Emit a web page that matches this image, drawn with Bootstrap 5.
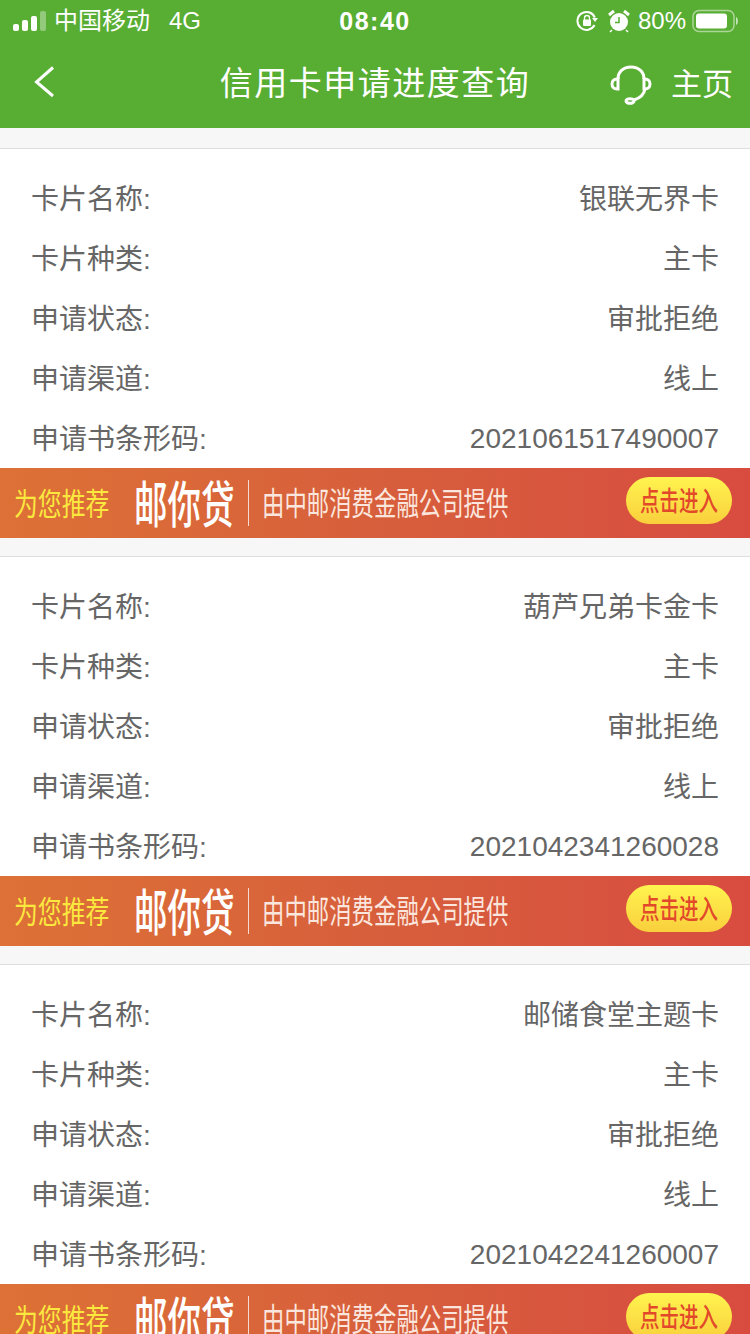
<!DOCTYPE html>
<html lang="zh-CN">
<head>
  <meta charset="UTF-8" />
  <title>信用卡申请进度查询</title>
  <link href="https://cdn.jsdelivr.net/npm/bootstrap@5.3.0/dist/css/bootstrap.min.css" rel="stylesheet"/>
  <style>
    html, body { height: 1334px; overflow: hidden; }
    body {
      background: #f7f7f7;
      font-family: "Liberation Sans", "Noto Sans CJK SC", sans-serif;
    }
    .app-head { background: #58ad33; color: #fff; height: 128px; }
    .status-row { height: 40px; font-size: 24px; }
    .status-time { font-size: 25px; font-weight: 700; letter-spacing: 1.5px; width: 100%; text-align: center; }
    .status-left, .status-right { position: absolute; top: 1px; height: 40px; }
    .status-left { left: 13px; }
    .status-right { right: 12px; }
    .head-row { height: 88px; position: relative; padding-bottom: 1px; }
    .head-title { font-size: 33px; letter-spacing: 1.5px; }
    .head-back { position: absolute; left: 33px; top: 24px; }
    .head-home { position: absolute; right: 17px; top: 22px; font-size: 31px; gap: 19px; }
    .apply-card { background: #fff; border-top: 1px solid #dedede; margin-top: 18px; }
    .apply-card:first-child { margin-top: 20px; }
    .apply-rows { padding: 20px 31px 0 31px; }
    .apply-line {
      height: 60px; padding-top: 2px; font-size: 28px; color: #666;
      display: flex; justify-content: space-between; align-items: center;
    }
    .apply-line:last-child { height: 59px; }
    .apply-code { margin-top: -2px; }
    .promo {
      height: 70px; position: relative;
      background: linear-gradient(90deg, #dd7136 0%, #d75f3c 50%, #d84c40 100%);
      font-family: "Noto Sans CJK SC", sans-serif;
    }
    .promo-a, .promo-b, .promo-c { position: absolute; white-space: nowrap; transform-origin: left; }
    .promo-a { color: #fbe83f; font-size: 31px; transform: scaleX(.77); left: 14px; top: 11px; line-height: 46px; }
    .promo-b { color: #fff; font-size: 50px; font-weight: 500; transform: scaleX(.67); left: 134px; top: 3px; line-height: 60px; }
    .promo-sep { position: absolute; left: 248px; top: 12px; height: 46px; border-left: 1px solid #f6dcd0; }
    .promo-c { color: #fbe6de; font-size: 32px; transform: scaleX(.7); left: 262px; top: 9px; line-height: 48px; }
    .promo-btn {
      position: absolute; left: 626px; top: 9px; width: 106px; height: 47px; border-radius: 24px;
      background: linear-gradient(180deg, #fff44f, #f9cf3c); color: #e2492a;
      font-size: 27px; font-weight: 500; line-height: 46px; text-align: center; white-space: nowrap;
    }
    .promo-btn span { display: inline-block; transform: scaleX(.72); margin: 0 -20px; }
  </style>
</head>
<body>

  <!-- Header -->
  <div class="app-head position-relative">
    <div class="status-row position-relative">
      <div class="status-left d-flex align-items-center">
        <svg width="33" height="22" viewBox="0 0 33 22">
          <rect x="0" y="14" width="6" height="7" rx="2" fill="#fff"/>
          <rect x="9" y="10" width="6" height="11" rx="2" fill="#fff"/>
          <rect x="18" y="6" width="6" height="15" rx="2" fill="#fff"/>
          <rect x="27" y="1" width="6" height="20" rx="2" fill="#fff" fill-opacity=".35"/>
        </svg>
        <span class="ms-2">中国移动</span>
        <span style="margin-left:19px">4G</span>
      </div>
      <div class="status-time lh-1" style="padding-top:9px">08:40</div>
      <div class="status-right d-flex align-items-center">
        <svg width="22" height="22" viewBox="0 0 22 22" fill="none">
          <path d="M18.500 15a9 9 0 1 1 .3-7.500" stroke="#fff" stroke-width="2"/>
          <path d="M16 8h6l-3 4z" fill="#fff"/>
          <rect x="7" y="9.500" width="8" height="6.500" rx="1" fill="#fff"/>
          <path d="M8.500 10V8a2.500 2.500 0 0 1 5 0v2" stroke="#fff" stroke-width="1.300"/>
        </svg>
        <svg width="22" height="24" viewBox="0 0 22 24" fill="none" style="margin-left:10px">
          <circle cx="11" cy="13" r="9" fill="#fff"/>
          <path d="M11 8v5.500H7" stroke="#58ad33" stroke-width="1.500"/>
          <path d="M1 6l5-4M21 6l-5-4" stroke="#fff" stroke-width="3"/>
          <path d="M4 21l-2 2M18 21l2 2" stroke="#fff" stroke-width="1.500"/>
        </svg>
        <span style="margin-left:8px">80%</span>
        <svg width="46" height="24" viewBox="0 0 46 24" fill="none" style="margin-left:6px">
          <rect x="1" y="1.500" width="41" height="21" rx="6" stroke="#fff" stroke-opacity=".5" stroke-width="1.500"/>
          <rect x="4" y="4.500" width="31" height="15" rx="3" fill="#fff"/>
          <path d="M44.500 8.500c1.200.8 1.200 6.200 0 7z" fill="#fff" fill-opacity=".5" stroke="#fff" stroke-opacity=".5"/>
        </svg>
      </div>
    </div>
    <div class="head-row d-flex justify-content-center align-items-center">
      <a class="head-back" href="#" aria-label="返回">
        <svg width="24" height="36" viewBox="0 0 24 36" fill="none">
          <path d="M20 3.500 3.500 18 20 32" stroke="#fff" stroke-width="3"/>
        </svg>
      </a>
      <div class="head-title">信用卡申请进度查询</div>
      <div class="head-home d-flex align-items-center">
        <svg width="42" height="40" viewBox="0 0 42 40" fill="none" stroke="#fff" stroke-width="3">
          <path d="M8 14C8 7 13 2 21 2s13 5 13 12"/>
          <path d="M7 14C4 14 2 16 2 19s2 5 5 5h1V14z"/>
          <path d="M35 14c3 0 5 2 5 5s-2 5-5 5h-1V14z"/>
          <path d="M35 24c-1 6-5 9-11 11"/>
          <ellipse cx="20" cy="36" rx="4" ry="2.300"/>
        </svg>
        <span>主页</span>
      </div>
    </div>
  </div>

  <!-- Applications -->
  <div id="list"></div>

  <script>
    const apps = [
      { name: "银联无界卡", code: "2021061517490007" },
      { name: "葫芦兄弟卡金卡", code: "2021042341260028" },
      { name: "邮储食堂主题卡", code: "2021042241260007" }
    ];
    document.getElementById("list").innerHTML = apps.map(a => `
      <div class="apply-card">
        <div class="apply-rows">
          <div class="apply-line"><span>卡片名称:</span><span>${a.name}</span></div>
          <div class="apply-line"><span>卡片种类:</span><span>主卡</span></div>
          <div class="apply-line"><span>申请状态:</span><span>审批拒绝</span></div>
          <div class="apply-line"><span>申请渠道:</span><span>线上</span></div>
          <div class="apply-line"><span>申请书条形码:</span><span class="apply-code">${a.code}</span></div>
        </div>
        <div class="promo">
          <div class="promo-a">为您推荐</div>
          <div class="promo-b">邮你贷</div>
          <div class="promo-sep"></div>
          <div class="promo-c">由中邮消费金融公司提供</div>
          <div class="promo-btn"><span>点击进入</span></div>
        </div>
      </div>`).join("");
  </script>
  <script src="https://cdn.jsdelivr.net/npm/bootstrap@5.3.0/dist/js/bootstrap.bundle.min.js"></script>
</body>
</html>
